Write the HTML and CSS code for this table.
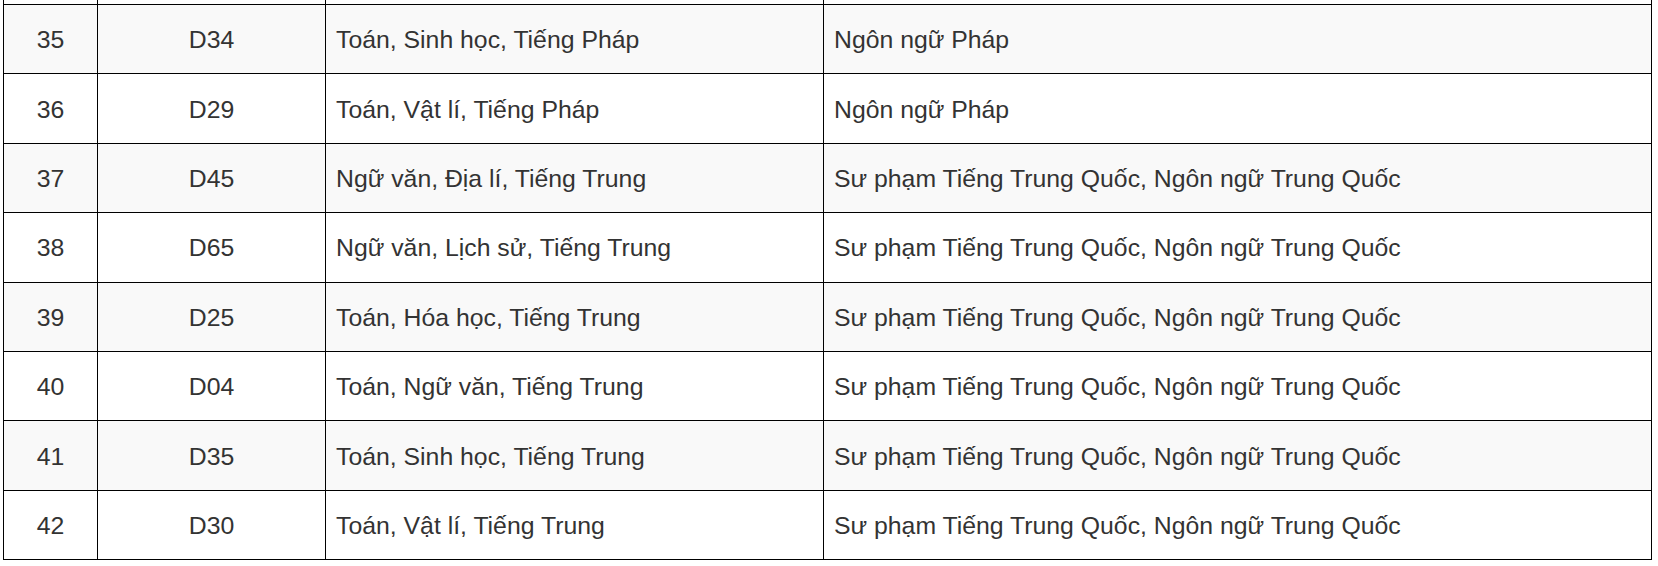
FILE: index.html
```html
<!DOCTYPE html>
<html lang="vi">
<head>
<meta charset="utf-8">
<link rel="stylesheet" href="styles.css">
<title>Tổ hợp môn</title>
</head>
<body>
<div class="wrap">
<table class="grid">
<colgroup>
<col class="c1"><col class="c2"><col class="c3"><col class="c4">
</colgroup>
<tbody>
<tr class="prev"><td></td><td></td><td></td><td></td></tr>
<tr class="odd"><td class="ctr">35</td><td class="ctr">D34</td><td>Toán, Sinh học, Tiếng Pháp</td><td>Ngôn ngữ Pháp</td></tr>
<tr><td class="ctr">36</td><td class="ctr">D29</td><td>Toán, Vật lí, Tiếng Pháp</td><td>Ngôn ngữ Pháp</td></tr>
<tr class="odd"><td class="ctr">37</td><td class="ctr">D45</td><td>Ngữ văn, Địa lí, Tiếng Trung</td><td>Sư phạm Tiếng Trung Quốc, Ngôn ngữ Trung Quốc</td></tr>
<tr><td class="ctr">38</td><td class="ctr">D65</td><td>Ngữ văn, Lịch sử, Tiếng Trung</td><td>Sư phạm Tiếng Trung Quốc, Ngôn ngữ Trung Quốc</td></tr>
<tr class="odd"><td class="ctr">39</td><td class="ctr">D25</td><td>Toán, Hóa học, Tiếng Trung</td><td>Sư phạm Tiếng Trung Quốc, Ngôn ngữ Trung Quốc</td></tr>
<tr><td class="ctr">40</td><td class="ctr">D04</td><td>Toán, Ngữ văn, Tiếng Trung</td><td>Sư phạm Tiếng Trung Quốc, Ngôn ngữ Trung Quốc</td></tr>
<tr class="odd"><td class="ctr">41</td><td class="ctr">D35</td><td>Toán, Sinh học, Tiếng Trung</td><td>Sư phạm Tiếng Trung Quốc, Ngôn ngữ Trung Quốc</td></tr>
<tr><td class="ctr">42</td><td class="ctr">D30</td><td>Toán, Vật lí, Tiếng Trung</td><td>Sư phạm Tiếng Trung Quốc, Ngôn ngữ Trung Quốc</td></tr>
</tbody>
</table>
</div>
</body>
</html>
```
FILE: styles.css
```css
html, body {
  margin: 0;
  padding: 0;
  background: #ffffff;
}
.wrap {
  padding-left: 3px;
  overflow: hidden;
  height: 566px;
}
.grid {
  border-collapse: collapse;
  table-layout: fixed;
  width: 1648px;
  margin-top: -65.4px;
  font-family: "Liberation Sans", Arial, sans-serif;
  font-size: 24.8px;
  color: #333333;
}
.c1 { width: 94px; }
.c2 { width: 228px; }
.c3 { width: 498px; }
.c4 { width: 828px; }
.grid td {
  border: 1px solid #000000;
  height: 66.4px;
  padding: 2px 10px 0;
  line-height: 28px;
  vertical-align: middle;
  white-space: nowrap;
  box-sizing: content-box;
}
.grid td.ctr {
  text-align: center;
}
.grid tr.odd td {
  background: #f9f9f9;
}
```
